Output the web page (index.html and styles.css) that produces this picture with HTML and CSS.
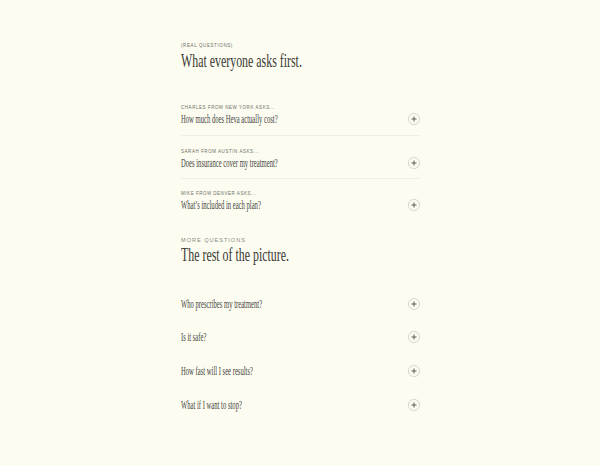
FILE: index.html
```html
<!DOCTYPE html>
<html>
<head>
<meta charset="utf-8">
<link rel="stylesheet" href="styles.css">
</head>
<body>
<main class="faq">
  <section class="group">
    <div class="kicker">(Real questions)</div>
    <h2 class="title"><span class="narrow">What everyone asks first.</span></h2>
    <ul class="asks">
      <li class="ask">
        <div class="who">Charles from New York asks...</div>
        <div class="row"><span class="q narrow">How much does Heva actually cost?</span><span class="plus"></span></div>
      </li>
      <li class="ask">
        <div class="who">Sarah from Austin asks...</div>
        <div class="row"><span class="q narrow">Does insurance cover my treatment?</span><span class="plus"></span></div>
      </li>
      <li class="ask last">
        <div class="who">Mike from Denver asks...</div>
        <div class="row"><span class="q narrow">What’s included in each plan?</span><span class="plus"></span></div>
      </li>
    </ul>
  </section>
  <section class="group more">
    <div class="kicker big">More questions</div>
    <h2 class="title"><span class="narrow">The rest of the picture.</span></h2>
    <ul class="list">
      <li class="row item"><span class="q narrow">Who prescribes my treatment?</span><span class="plus"></span></li>
      <li class="row item"><span class="q narrow">Is it safe?</span><span class="plus"></span></li>
      <li class="row item"><span class="q narrow">How fast will I see results?</span><span class="plus"></span></li>
      <li class="row item"><span class="q narrow">What if I want to stop?</span><span class="plus"></span></li>
    </ul>
  </section>
</main>
</body>
</html>
```
FILE: styles.css
```css
html, body {
  margin: 0;
  padding: 0;
  background: #fcfcf1;
}
body {
  font-family: "Liberation Serif", serif;
  color: #3a3a34;
}
.faq {
  width: 239px;
  margin: 0 auto;
  padding: 43px 0 0 1px;
}
.kicker {
  font-family: "Liberation Sans", sans-serif;
  font-size: 4.5px;
  line-height: 6px;
  height: 6px;
  letter-spacing: 0.6px;
  text-transform: uppercase;
  color: #6f6f66;
}
.kicker.big {
  font-size: 5.6px;
  letter-spacing: 0.97px;
  color: #8a8a80;
  margin-bottom: 1px;
}
.title {
  margin: 1px 0 0;
  font-weight: normal;
  font-size: 19px;
  line-height: 22px;
  color: #3a3a34;
}
.title .narrow {
  transform: scaleX(0.626);
}
.narrow {
  display: inline-block;
  transform-origin: 0 50%;
  white-space: nowrap;
}
.asks, .list {
  list-style: none;
  margin: 0;
  padding: 0;
}
.asks {
  margin-top: 20px;
}
.ask {
  padding: 13px 0 8.5px;
  border-bottom: 1px solid #efefe3;
}
.ask.last {
  padding-top: 12px;
  border-bottom: none;
}
.who {
  font-family: "Liberation Sans", sans-serif;
  font-size: 4.5px;
  line-height: 6px;
  letter-spacing: 0.55px;
  text-transform: uppercase;
  color: #6f6f66;
  margin-bottom: 1px;
}
.row {
  display: flex;
  align-items: center;
  justify-content: space-between;
  height: 14px;
}
.q {
  font-size: 11.5px;
  line-height: 14px;
  color: #45453e;
  transform: scaleX(0.576);
}
.plus {
  position: relative;
  flex: none;
  width: 10px;
  height: 10px;
  border: 1px solid #d9d9cf;
  border-radius: 50%;
  background: #fcfcf3;
  box-shadow: 0 0 1px rgba(0,0,0,0.06);
}
.plus::before, .plus::after {
  content: "";
  position: absolute;
  left: 50%;
  top: 50%;
  background: #5a5a52;
}
.plus::before {
  width: 5px;
  height: 1px;
  transform: translate(-50%, -50%);
}
.plus::after {
  width: 1px;
  height: 5px;
  transform: translate(-50%, -50%);
}
.more {
  margin-top: 16px;
}
.list {
  margin-top: 31px;
}
.item {
  margin-bottom: 19.7px;
}
```
